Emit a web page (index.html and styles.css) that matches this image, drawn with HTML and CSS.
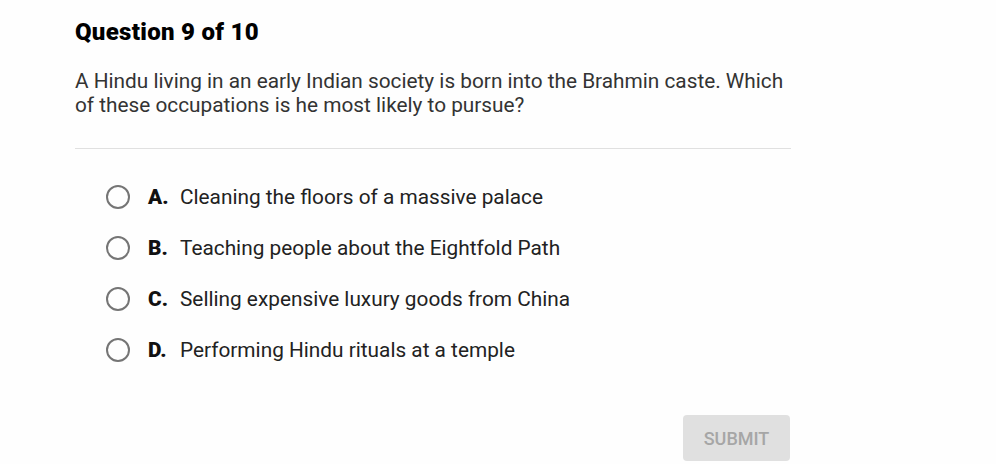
FILE: index.html
```html
<!DOCTYPE html>
<html lang="en">
<head>
    <meta charset="UTF-8">
    <meta name="viewport" content="width=device-width, initial-scale=1.0">
    <title>Question 9 of 10</title>
    <link rel="stylesheet" href="styles.css">
</head>
<body>
    <div class="quiz">
        <h2 class="quiz-title">Question 9 of 10</h2>
        <p class="quiz-question">A Hindu living in an early Indian society is born into the Brahmin caste. Which of these occupations is he most likely to pursue?</p>
        <hr class="divider">

        <form class="answers">
            <label class="answer">
                <input type="radio" name="answer" value="A">
                <span class="radio"></span>
                <span class="letter">A.</span>
                <span class="answer-text">Cleaning the floors of a massive palace</span>
            </label>
            <label class="answer">
                <input type="radio" name="answer" value="B">
                <span class="radio"></span>
                <span class="letter">B.</span>
                <span class="answer-text">Teaching people about the Eightfold Path</span>
            </label>
            <label class="answer">
                <input type="radio" name="answer" value="C">
                <span class="radio"></span>
                <span class="letter">C.</span>
                <span class="answer-text">Selling expensive luxury goods from China</span>
            </label>
            <label class="answer">
                <input type="radio" name="answer" value="D">
                <span class="radio"></span>
                <span class="letter">D.</span>
                <span class="answer-text">Performing Hindu rituals at a temple</span>
            </label>

            <div class="actions">
                <button type="button" class="submit" disabled>SUBMIT</button>
            </div>
        </form>
    </div>
</body>
</html>
```

FILE: styles.css
```css
body {
    margin: 0;
    background: #fefefe;
    font-family: Roboto, "Liberation Sans", sans-serif;
    color: #222;
}
.quiz {
    width: 716px;
    padding: 19px 0 0 75px;
}
.quiz-title {
    margin: 0;
    font-size: 24px;
    font-weight: 900;
    letter-spacing: 0.3px;
    line-height: 26px;
    color: #000;
}
.quiz-question {
    margin: 24px 0 0;
    font-size: 20.8px;
    line-height: 24px;
    color: #333;
}
.divider {
    margin: 31px 0 0;
    border: 0;
    border-top: 1px solid #e0e0e0;
}
.answers {
    display: flex;
    flex-direction: column;
    padding-top: 22px;
}
.answer {
    display: flex;
    align-items: center;
    height: 51px;
    padding-left: 31px;
    font-size: 20.8px;
    cursor: pointer;
}
.answer input {
    display: none;
}
.radio {
    width: 20px;
    height: 20px;
    border: 2px solid #757575;
    border-radius: 50%;
    margin-right: 18px;
    flex: none;
}
.letter {
    font-weight: 900;
    color: #111;
    width: 32px;
}
.answer-text {
    color: #222;
}
.actions {
    display: flex;
    justify-content: flex-end;
    padding-top: 40px;
}
.submit {
    width: 107px;
    height: 46px;
    border: 0;
    border-radius: 4px;
    background: #e0e0e0;
    color: #a6a6a6;
    font-family: Roboto, "Liberation Sans", sans-serif;
    font-size: 18px;
    font-weight: 500;
    margin-right: 1px;
}
```
